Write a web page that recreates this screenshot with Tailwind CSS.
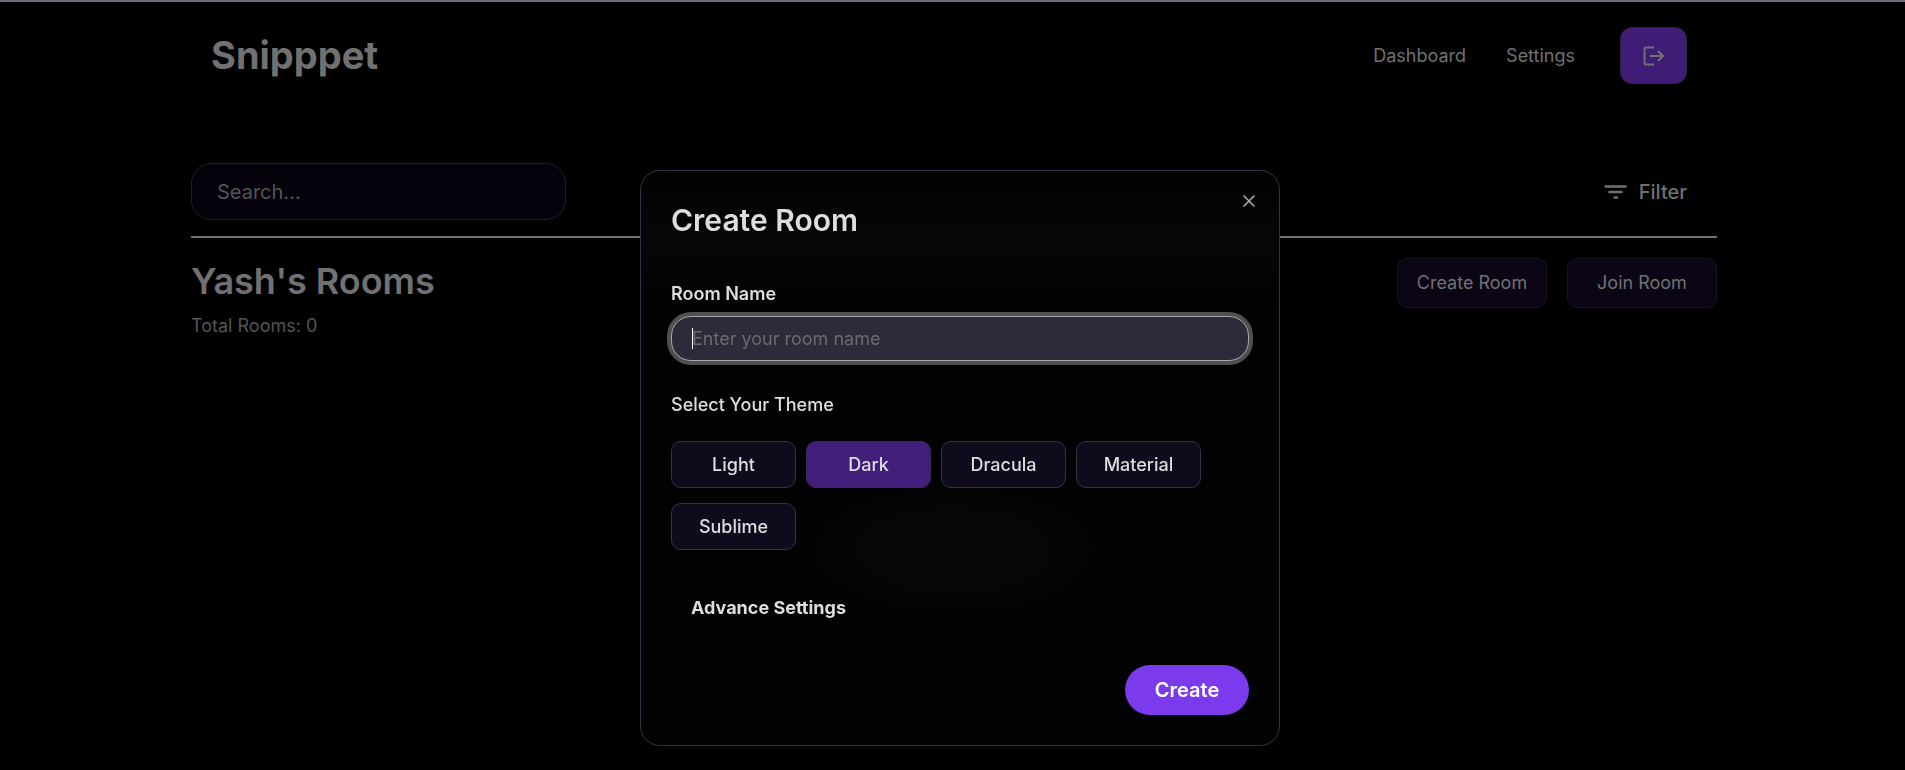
<!DOCTYPE html>
<html lang="en">
<head>
<meta charset="utf-8">
<title>Snipppet</title>
<script src="https://cdn.jsdelivr.net/npm/@tailwindcss/browser@4"></script>
</head>
<body class="min-h-screen overflow-hidden border-t-2 border-[#6b6b7a] bg-black font-['Inter',sans-serif] text-lg text-[#717171]">
  <div class="pr-[188px] pl-[191px]">
    <header class="flex items-center justify-between pt-[25px] pr-[30px] pl-5">
      <h1 class="pb-0.5 text-[38px]/[48px] font-bold">Snipppet</h1>
      <nav class="flex items-center">
        <a href="#" class="mr-10">Dashboard</a>
        <a href="#" class="mr-[45px]">Settings</a>
        <button type="button" aria-label="Log out" class="flex h-[57px] w-[67px] items-center justify-center rounded-xl border border-[#2a2440] bg-[#3f1d77]">
          <svg class="size-6" viewBox="0 0 24 24" fill="none" stroke="currentColor" stroke-width="2"><path d="M12 3.500H4Q2.500 3.500 2.500 5v14q0 1.500 1.500 1.500H12M8 12h13M16 7l5 5-5 5"/></svg>
        </button>
      </nav>
    </header>

    <main>
      <div class="mt-[79px] flex items-center justify-between border-b-2 border-[#717171] pr-[30px] pb-4">
        <input type="search" aria-label="Search rooms" placeholder="Search..." class="h-[57px] w-[375px] rounded-[20px] border border-[#1f1e26] bg-[#05020c] px-[25px] text-xl placeholder:text-[#555555]">
        <button type="button" class="flex items-center gap-3 text-xl font-medium">
          <svg class="h-4 w-[23px]" viewBox="0 0 23 16" fill="none" stroke="currentColor" stroke-width="2.500" stroke-linecap="round"><path d="M1.500 2.500h20M5.500 8h12M10.500 13.500h2.500"/></svg>
          Filter
        </button>
      </div>
      <section class="flex items-start justify-between pt-5">
        <div>
          <h2 class="text-4xl/[46px] font-semibold">Yash's Rooms</h2>
          <p class="mt-2 text-[#555555]">Total Rooms: 0</p>
        </div>
        <div class="flex gap-5">
          <button type="button" class="h-[50px] w-[150px] rounded-[10px] border border-[#17141f] bg-[#0b0515]">Create Room</button>
          <button type="button" class="h-[50px] w-[150px] rounded-[10px] border border-[#17141f] bg-[#0b0515]">Join Room</button>
        </div>
      </section>
    </main>
  </div>

  <div class="fixed inset-0 flex items-start justify-center pt-[170px] pl-[15px]">
    <form role="dialog" aria-labelledby="dialog-title" class="relative w-full max-w-[640px] rounded-[20px] border border-[#343148] bg-[#020202] bg-[radial-gradient(ellipse_170px_75px_at_49%_66%,#060707_30%,transparent),linear-gradient(#020202,#060606_12%,#020202_24%)] p-[30px] text-[#dedede]">
      <button type="button" aria-label="Close" class="absolute top-5 right-[15px] flex size-5 items-center justify-center text-[#b0b0b0] sm:right-5">
        <svg class="size-3" viewBox="0 0 12 12" fill="none" stroke="currentColor" stroke-width="1.500"><path d="M0.500 0.500l11 11M11.500 0.500l-11 11"/></svg>
      </button>
      <h2 id="dialog-title" class="text-3xl/[38px] font-semibold">Create Room</h2>
      <label for="room-name" class="mt-[41px] block font-semibold">Room Name</label>
      <div class="relative mt-2">
        <input id="room-name" type="text" placeholder="Enter your room name" class="block h-[45px] w-full rounded-[20px] border border-[#a8a8a8] bg-[#2d2a3a] px-5 ring-4 ring-[#505050] outline-none placeholder:text-[#6b6b6b]">
        <span class="absolute top-3 left-[21px] h-[21px] w-px bg-white"></span>
      </div>
      <fieldset class="mt-[30px]">
        <legend class="font-medium">Select Your Theme</legend>
        <div class="mt-[22px] flex flex-wrap gap-x-2.5 gap-y-[15px] font-medium">
          <button type="button" class="h-[47px] w-[125px] rounded-[10px] border border-[#343148] bg-[#100b1c]">Light</button>
          <button type="button" aria-pressed="true" class="h-[47px] w-[125px] rounded-[10px] border border-[#3a2b5c] bg-[#411e7a]">Dark</button>
          <button type="button" class="h-[47px] w-[125px] rounded-[10px] border border-[#343148] bg-[#100b1c]">Dracula</button>
          <button type="button" class="h-[47px] w-[125px] rounded-[10px] border border-[#343148] bg-[#100b1c]">Material</button>
          <button type="button" class="h-[47px] w-[125px] rounded-[10px] border border-[#343148] bg-[#100b1c]">Sublime</button>
        </div>
      </fieldset>
      <button type="button" class="mt-11 ml-5 block font-bold">Advance Settings</button>
      <div class="mt-[43px] flex justify-end">
        <button type="submit" class="h-[50px] w-[124px] rounded-full bg-[#7c3aed] text-xl font-semibold text-white">Create</button>
      </div>
    </form>
  </div>
</body>
</html>
